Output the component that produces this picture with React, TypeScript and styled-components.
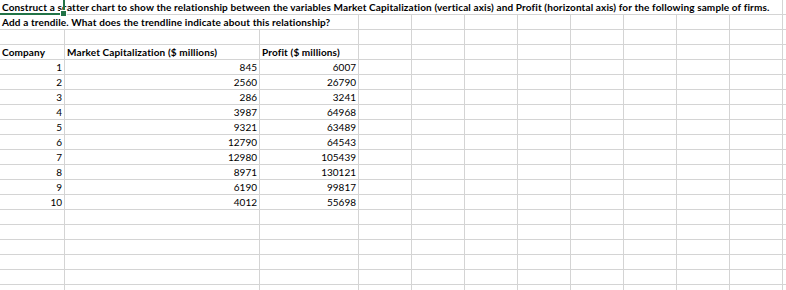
import React from 'react';
import styled, { createGlobalStyle } from 'styled-components';

const GRID_LINE = '#d4d4d4';
const EXCEL_GREEN = '#217346';
const COLUMN_COUNT = 12;

const GlobalStyle = createGlobalStyle`
    html, body {
        margin: 0;
        padding: 0;
        background: #ffffff;
        overflow: hidden;
    }
`

// the last column runs on past the window, so the sheet clips it
const Sheet = styled.div`
    display: grid;
    grid-template-columns: 65px 195px 99px repeat(8, 53px) 80px;
    grid-auto-rows: 15px;
    width: 100%;
    overflow: hidden;
    font-family: Lato, 'Liberation Sans', sans-serif;
    font-size: 10px;
    font-variant-ligatures: none;
    color: #000000;
`

const Cell = styled.div<{ $span?: number, $align?: 'left' | 'right', $bold?: boolean }>`
    grid-column: span ${p => p.$span ?? 1};
    box-sizing: border-box;
    border-right: 1px solid ${GRID_LINE};
    border-bottom: 1px solid ${GRID_LINE};
    padding: 0 2px;
    line-height: 14px;
    white-space: nowrap;
    text-align: ${p => p.$align ?? 'left'};
    font-weight: ${p => (p.$bold ? 700 : 400)};
    letter-spacing: ${p => (p.$bold ? '0.13px' : '0')};
`

const ActiveCell = styled(Cell)`
    position: relative;
`

// green box Excel draws round the selected cell, clipped by the window edge
const Selection = styled.div`
    position: absolute;
    left: -2px;
    top: -2px;
    width: 67px;
    height: 17px;
    box-sizing: border-box;
    border: 2px solid ${EXCEL_GREEN};
    pointer-events: none;
    z-index: 2;
`

const FillHandle = styled.div`
    position: absolute;
    right: -4px;
    bottom: -4px;
    width: 5px;
    height: 5px;
    background: ${EXCEL_GREEN};
    border: 1px solid #ffffff;
`

const companies = [
    { id: 1, marketCap: 845, profit: 6007 },
    { id: 2, marketCap: 2560, profit: 26790 },
    { id: 3, marketCap: 286, profit: 3241 },
    { id: 4, marketCap: 3987, profit: 64968 },
    { id: 5, marketCap: 9321, profit: 63489 },
    { id: 6, marketCap: 12790, profit: 64543 },
    { id: 7, marketCap: 12980, profit: 105439 },
    { id: 8, marketCap: 8971, profit: 130121 },
    { id: 9, marketCap: 6190, profit: 99817 },
    { id: 10, marketCap: 4012, profit: 55698 },
]

const EmptyCells = ({ count, row }: { count: number, row: string }) => (
    <React.Fragment>
        {Array.from({ length: count }, (_, i) => <Cell key={`${row}-${i}`} />)}
    </React.Fragment>
)

const App = () => {
    return (
        <React.Fragment>
            <GlobalStyle />
            <Sheet>
                <ActiveCell $span={11} $bold>
                    Construct a scatter chart to show the relationship between the variables Market Capitalization (vertical axis) and Profit (horizontal axis) for the following sample of firms.
                    <Selection>
                        <FillHandle />
                    </Selection>
                </ActiveCell>
                <EmptyCells count={1} row="r0" />

                <Cell $span={3} $bold>
                    Add a trendile. What does the trendline indicate about this relationship?
                </Cell>
                <EmptyCells count={COLUMN_COUNT - 3} row="r1" />

                <EmptyCells count={COLUMN_COUNT} row="r2" />

                <Cell $bold>Company</Cell>
                <Cell $bold>Market Capitalization ($ millions)</Cell>
                <Cell $bold>Profit ($ millions)</Cell>
                <EmptyCells count={COLUMN_COUNT - 3} row="r3" />

                {
                    companies.map(company => (
                        <React.Fragment key={company.id}>
                            <Cell $align="right">{company.id}</Cell>
                            <Cell $align="right">{company.marketCap}</Cell>
                            <Cell $align="right">{company.profit}</Cell>
                            <EmptyCells count={COLUMN_COUNT - 3} row={`d${company.id}`} />
                        </React.Fragment>
                    ))
                }

                {
                    [14, 15, 16, 17, 18, 19].map(row => (
                        <EmptyCells key={row} count={COLUMN_COUNT} row={`e${row}`} />
                    ))
                }
            </Sheet>
        </React.Fragment>
    )
}

export default App;
